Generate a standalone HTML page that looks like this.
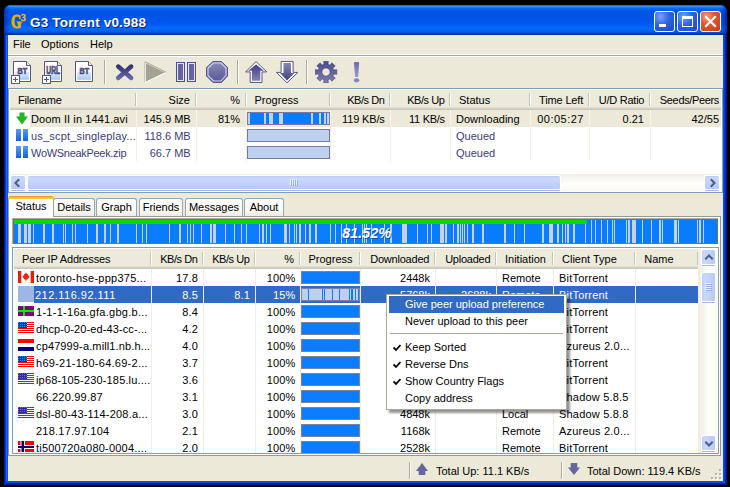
<!DOCTYPE html><html><head><meta charset="utf-8"><title>G3 Torrent</title><style>
*{box-sizing:border-box}
html,body{margin:0;padding:0}
body{width:730px;height:487px;background:#000;overflow:hidden;position:relative;font-family:"Liberation Sans",sans-serif;font-size:11px;color:#000}
.a{position:absolute}
.t{position:absolute;white-space:nowrap;line-height:13px;height:13px}
.r{text-align:right}
#win{left:4px;top:5px;width:723px;height:480px;background:#0831d9;border-radius:7px 7px 0 0;overflow:hidden}
#tb{left:0;top:0;width:723px;height:30px;background:linear-gradient(to bottom,#0058ee 0%,#3593ff 4%,#288eff 6%,#127dff 8%,#036ffc 10%,#0262ee 14%,#0057e5 20%,#0054e3 24%,#0055eb 56%,#005bf5 66%,#026afe 76%,#0062ef 86%,#0052d6 92%,#0040ab 94%,#003092 100%)}
#bl{left:0;top:30px;width:4px;height:450px;background:linear-gradient(to right,#0019cf 0,#0019cf 1px,#0831d9 1px,#0831d9 2px,#166aee 2px,#166aee 3px,#0855dd 3px)}
#br{left:719px;top:30px;width:4px;height:450px;background:linear-gradient(to right,#0448ee 0,#0448ee 1px,#0440e6 1px,#0440e6 2px,#0028b8 2px,#0028b8 3px,#001388 3px)}
#bb{left:2px;top:476px;width:719px;height:4px;background:linear-gradient(to bottom,#0a52e2 0,#0a52e2 1px,#0848dc 1px,#0848dc 2px,#0028b4 2px,#0028b4 3px,#001388 3px)}
#cl{left:4px;top:30px;width:715px;height:446px;background:#ece9d8}
.title{left:26px;top:10px;letter-spacing:0.18px;font-weight:bold;font-size:13.5px;color:#fff;line-height:16px;height:16px;text-shadow:1px 1px 0 #0a1f7a;white-space:nowrap}
.cb{position:absolute;top:6px;width:21px;height:21px;border:1px solid #fff;border-radius:3px}
.hd{position:absolute;background:#ebeadb;height:20px;border-bottom:1px solid #cbc7b8;box-shadow:inset 0 -1px 0 #d6d2c2, inset 0 -2px 0 #e2ded0}
.hs{position:absolute;width:2px;border-left:1px solid #c7c5b2;border-right:1px solid #fff}
.lb{position:absolute;background:#fff;border:1px solid #7f9db9}
.gl{position:absolute;width:1px;background:#f1efe2}
.pb{position:absolute;border:1px solid #7a7aa8}
.tab{position:absolute;border:1px solid #919b9c;border-bottom:none;border-radius:3px 3px 0 0;background:linear-gradient(to bottom,#fff,#f5f4ea 80%,#ece9d8);}
.sel{color:#fff}
.q{color:#3c3c7c}
</style></head><body>
<div id="win" class="a">
<div id="tb" class="a"></div><div class="a" style="left:0;top:0;width:6px;height:30px;background:linear-gradient(to right,rgba(0,25,170,.6),rgba(0,25,170,0))"></div><div class="a" style="left:717px;top:0;width:6px;height:30px;background:linear-gradient(to left,rgba(0,20,150,.7),rgba(0,20,150,0))"></div><div id="bl" class="a"></div><div id="br" class="a"></div><div id="bb" class="a"></div>
<svg class="a" style="left:5px;top:7px" width="20" height="18" viewBox="0 0 20 18"><text transform="translate(1.9,16) scale(0.7,1)" font-family="Liberation Serif" font-weight="bold" font-size="19" fill="#e6ae00" stroke="#e6ae00" stroke-width="1.1" stroke-linejoin="round">G</text><text x="12" y="8.6" font-family="Liberation Serif" font-weight="bold" font-size="9.5" fill="#e8b818" stroke="#e8b818" stroke-width="0.4">3</text></svg>
<div class="a title">G3 Torrent v0.988</div>
<div class="cb" style="left:650px;background:radial-gradient(circle at 30% 25%,#7aa0f8 0%,#2d62e0 45%,#1a48c8 100%)"><div class="a" style="left:4px;top:12px;width:7px;height:3px;background:#fff"></div></div>
<div class="cb" style="left:673px;background:radial-gradient(circle at 30% 25%,#7aa0f8 0%,#2d62e0 45%,#1a48c8 100%)"><div class="a" style="left:4px;top:4px;width:11px;height:11px;border:1px solid #fff;border-top:3px solid #fff"></div></div>
<div class="cb" style="left:696px;background:radial-gradient(circle at 30% 25%,#f0a080 0%,#e0552c 40%,#c53a12 100%)"><svg class="a" style="left:0;top:0" width="19" height="19"><path d="M5 5 L14 14 M14 5 L5 14" stroke="#fff" stroke-width="2.2" stroke-linecap="square"/></svg></div>
<div id="cl" class="a">
<div class="t " style="left:5px;top:3px;">File</div>
<div class="t " style="left:33px;top:3px;">Options</div>
<div class="t " style="left:82px;top:3px;">Help</div>
<div class="a" style="left:0px;top:19px;width:715px;height:1px;background:#fff"></div>
<div class="a" style="left:0px;top:20px;width:715px;height:1px;background:#aca899"></div>
<div class="a" style="left:0px;top:21px;width:715px;height:1px;background:#fff"></div>
<svg class="a" style="left:3px;top:25px" width="24" height="26" viewBox="0 0 24 26"><defs><linearGradient id="dg11" x1="0" y1="0" x2="0" y2="1"><stop offset="0" stop-color="#e2edfb"/><stop offset="1" stop-color="#a4c9f0"/></linearGradient><linearGradient id="tg11" x1="0" y1="0" x2="0" y2="1"><stop offset="0" stop-color="#74749e"/><stop offset="1" stop-color="#303064"/></linearGradient></defs><g transform="translate(-1,0)"><path d="M3.5 1.5 H16.5 L20.5 5.5 V21.5 H3.5 Z" fill="#fff" stroke="#55558f" stroke-width="1"/><rect x="5.2" y="11.8" width="13.8" height="8" fill="url(#dg11)"/><path d="M16.5 1.5 V5.5 H20.5" fill="#eef2fc" stroke="#55558f" stroke-width="1"/><text x="7.6" y="13.9" textLength="9.6" lengthAdjust="spacingAndGlyphs" font-family="Liberation Sans" font-weight="bold" font-size="9.6" fill="url(#tg11)" stroke="#4c4c7e" stroke-width="0.7">BT</text></g><rect x="0.5" y="15.5" width="8" height="8" fill="#fff" stroke="#55558f"/><path d="M2 19.5 H7 M4.5 17 V22" stroke="#55558f" stroke-width="1"/></svg>
<svg class="a" style="left:34px;top:25px" width="24" height="26" viewBox="0 0 24 26"><defs><linearGradient id="dg42" x1="0" y1="0" x2="0" y2="1"><stop offset="0" stop-color="#e2edfb"/><stop offset="1" stop-color="#a4c9f0"/></linearGradient><linearGradient id="tg42" x1="0" y1="0" x2="0" y2="1"><stop offset="0" stop-color="#74749e"/><stop offset="1" stop-color="#303064"/></linearGradient></defs><g transform="translate(-1,0)"><path d="M3.5 1.5 H16.5 L20.5 5.5 V21.5 H3.5 Z" fill="#fff" stroke="#55558f" stroke-width="1"/><rect x="5.2" y="11.8" width="13.8" height="8" fill="url(#dg42)"/><path d="M16.5 1.5 V5.5 H20.5" fill="#eef2fc" stroke="#55558f" stroke-width="1"/><text x="5.3" y="14.3" textLength="13.8" lengthAdjust="spacingAndGlyphs" font-family="Liberation Sans" font-weight="bold" font-size="10" fill="url(#tg42)" stroke="#4c4c7e" stroke-width="0.7">URL</text></g><rect x="0.5" y="15.5" width="8" height="8" fill="#fff" stroke="#55558f"/><path d="M2 19.5 H7 M4.5 17 V22" stroke="#55558f" stroke-width="1"/></svg>
<svg class="a" style="left:64px;top:25px" width="24" height="26" viewBox="0 0 24 26"><defs><linearGradient id="dg72" x1="0" y1="0" x2="0" y2="1"><stop offset="0" stop-color="#e2edfb"/><stop offset="1" stop-color="#a4c9f0"/></linearGradient><linearGradient id="tg72" x1="0" y1="0" x2="0" y2="1"><stop offset="0" stop-color="#74749e"/><stop offset="1" stop-color="#303064"/></linearGradient></defs><g transform="translate(0,0)"><path d="M3.5 1.5 H16.5 L20.5 5.5 V21.5 H3.5 Z" fill="#fff" stroke="#55558f" stroke-width="1"/><rect x="5.2" y="11.8" width="13.8" height="8" fill="url(#dg72)"/><path d="M16.5 1.5 V5.5 H20.5" fill="#eef2fc" stroke="#55558f" stroke-width="1"/><text x="7.6" y="13.9" textLength="9.6" lengthAdjust="spacingAndGlyphs" font-family="Liberation Sans" font-weight="bold" font-size="9.6" fill="url(#tg72)" stroke="#4c4c7e" stroke-width="0.7">BT</text></g></svg>
<div class="a" style="left:96px;top:25px;width:1px;height:24px;background:#aca899"></div><div class="a" style="left:97px;top:25px;width:1px;height:24px;background:#fff"></div>
<div class="a" style="left:229px;top:25px;width:1px;height:24px;background:#aca899"></div><div class="a" style="left:230px;top:25px;width:1px;height:24px;background:#fff"></div>
<div class="a" style="left:298px;top:25px;width:1px;height:24px;background:#aca899"></div><div class="a" style="left:299px;top:25px;width:1px;height:24px;background:#fff"></div>
<svg class="a" style="left:106px;top:27px" width="22" height="20" viewBox="0 0 22 20"><defs><linearGradient id="xg" gradientUnits="userSpaceOnUse" x1="0" y1="2" x2="0" y2="18"><stop offset="0" stop-color="#2a2a6c"/><stop offset="1" stop-color="#6e6ea8"/></linearGradient></defs><path d="M4.2 4.5 L17.2 16 M17.2 4.5 L4.2 16" stroke="url(#xg)" stroke-width="4.4" stroke-linecap="round" fill="none"/></svg>
<svg class="a" style="left:136px;top:26px" width="23" height="23" viewBox="0 0 23 23"><path d="M1.5 1.5 L21.7 11.5 L1.5 21.3 Z" fill="#a3a395" stroke="#fff" stroke-width="1" stroke-linejoin="miter"/><path d="M1 0.8 L22 11.3" stroke="#aeac9e" stroke-width="1.2"/><path d="M0.8 1 V21" stroke="#b0ae9f" stroke-width="0.8"/></svg>
<svg class="a" style="left:168px;top:27px" width="21" height="21" viewBox="0 0 21 21"><rect x="0.5" y="0.5" width="8" height="19" fill="#6464a0" stroke="#4e4e8e"/><rect x="1.5" y="1.5" width="6" height="17" fill="none" stroke="#f4f4fc" stroke-width="0.9"/><rect x="11.5" y="0.5" width="8" height="19" fill="#6464a0" stroke="#4e4e8e"/><rect x="12.5" y="1.5" width="6" height="17" fill="none" stroke="#f4f4fc" stroke-width="0.9"/></svg>
<svg class="a" style="left:198px;top:26px" width="23" height="22" viewBox="0 0 23 22"><defs><linearGradient id="pg" x1="0" y1="0" x2="0" y2="1"><stop offset="0" stop-color="#8c8cbc"/><stop offset="1" stop-color="#565692"/></linearGradient></defs><path d="M7 0.5 H15.5 L21.5 6.5 V15 L15.5 21.5 H7 L0.5 15 V6.5 Z" fill="url(#pg)" stroke="#55558f"/><path d="M7.6 2 H14.9 L20 7.1 V14.4 L14.9 20 H7.6 L2 14.4 V7.1 Z" fill="none" stroke="#d4d4ea" stroke-width="1.1"/></svg>
<svg class="a" style="left:237px;top:26px" width="23" height="23" viewBox="0 0 23 23"><defs><linearGradient id="ug" x1="0" y1="0" x2="0" y2="1"><stop offset="0" stop-color="#40407e"/><stop offset="1" stop-color="#8282b2"/></linearGradient></defs><path d="M11.1 0.6 L21.8 10.9 H17 V21.5 H5.2 V10.9 H0.5 Z" fill="#fff" stroke="#55558f" stroke-width="1"/><path d="M11.1 3.4 L19 9.8 H15.3 V19.8 H6.9 V9.8 H3.2 Z" fill="url(#ug)"/></svg>
<svg class="a" style="left:268px;top:26px" width="23" height="23" viewBox="0 0 23 23"><defs><linearGradient id="dng" x1="0" y1="0" x2="0" y2="1"><stop offset="0" stop-color="#8686b6"/><stop offset="1" stop-color="#40407e"/></linearGradient></defs><path d="M11 21.8 L21.8 11.4 H17.1 V0.5 H5.1 V11.4 H0.4 Z" fill="#fff" stroke="#55558f" stroke-width="1"/><path d="M7.5 2 H14.9 V12 H18.3 L11 19.4 L4 12 H7.5 Z" fill="url(#dng)"/></svg>
<svg class="a" style="left:307px;top:26px" width="23" height="22" viewBox="0 0 23 22"><defs><linearGradient id="pg2" x1="0" y1="0" x2="0" y2="1"><stop offset="0" stop-color="#4c4c8c"/><stop offset="1" stop-color="#7e7eb2"/></linearGradient></defs><path d="M8.98 3.36 L8.68 0.25 L13.32 0.25 L13.02 3.36 L14.97 4.17 L16.97 1.76 L20.24 5.03 L17.83 7.03 L18.64 8.98 L21.75 8.68 L21.75 13.32 L18.64 13.02 L17.83 14.97 L20.24 16.97 L16.97 20.24 L14.97 17.83 L13.02 18.64 L13.32 21.75 L8.68 21.75 L8.98 18.64 L7.03 17.83 L5.03 20.24 L1.76 16.97 L4.17 14.97 L3.36 13.02 L0.25 13.32 L0.25 8.68 L3.36 8.98 L4.17 7.03 L1.76 5.03 L5.03 1.76 L7.03 4.17 Z M11.00 6.90 a4.1 4.1 0 1 0 0.01 0 Z" fill="url(#pg2)" fill-rule="evenodd" stroke="#3e3e82" stroke-width="0.6"/></svg>
<svg class="a" style="left:345px;top:26px" width="8" height="23" viewBox="0 0 8 23"><defs><linearGradient id="eg" x1="0" y1="0" x2="0" y2="1"><stop offset="0" stop-color="#6a6aae"/><stop offset="1" stop-color="#9a9ad2"/></linearGradient></defs><path d="M1 2.2 Q1 1 2.2 1 H4.9 Q6.1 1 6.1 2.2 L5.2 16 H2.1 Z" fill="url(#eg)"/><ellipse cx="3.6" cy="19.3" rx="2.7" ry="2.1" fill="#8484c0"/></svg>
<div class="a" style="left:0px;top:53px;width:715px;height:105px;background:#fff;border:1px solid #7f9db9"></div>
<div class="a" style="left:2px;top:55px;width:711px;height:20px;background:#ebeadb;border-bottom:1px solid #cbc7b8;box-shadow:inset 0 -1px 0 #d6d2c2,inset 0 -2px 0 #e2ded0"></div><div class="t " style="left:10px;top:59px;letter-spacing:-0.2px">Filename</div><div class="a" style="left:127px;top:58px;width:1px;height:13px;background:#c7c5b2"></div><div class="a" style="left:128px;top:58px;width:1px;height:13px;background:#fff"></div><div class="t r " style="right:533px;top:59px;letter-spacing:0px;margin-right:0px">Size</div><div class="a" style="left:187px;top:58px;width:1px;height:13px;background:#c7c5b2"></div><div class="a" style="left:188px;top:58px;width:1px;height:13px;background:#fff"></div><div class="t r " style="right:483px;top:59px;letter-spacing:0px;margin-right:0px">%</div><div class="a" style="left:237px;top:58px;width:1px;height:13px;background:#c7c5b2"></div><div class="a" style="left:238px;top:58px;width:1px;height:13px;background:#fff"></div><div class="t " style="left:246.5px;top:59px;letter-spacing:0px">Progress</div><div class="a" style="left:321px;top:58px;width:1px;height:13px;background:#c7c5b2"></div><div class="a" style="left:322px;top:58px;width:1px;height:13px;background:#fff"></div><div class="t r " style="right:339px;top:59px;letter-spacing:-0.45px;margin-right:-0.45px">KB/s Dn</div><div class="a" style="left:381px;top:58px;width:1px;height:13px;background:#c7c5b2"></div><div class="a" style="left:382px;top:58px;width:1px;height:13px;background:#fff"></div><div class="t r " style="right:279px;top:59px;letter-spacing:-0.45px;margin-right:-0.45px">KB/s Up</div><div class="a" style="left:441px;top:58px;width:1px;height:13px;background:#c7c5b2"></div><div class="a" style="left:442px;top:58px;width:1px;height:13px;background:#fff"></div><div class="t " style="left:451px;top:59px;letter-spacing:0px">Status</div><div class="a" style="left:521px;top:58px;width:1px;height:13px;background:#c7c5b2"></div><div class="a" style="left:522px;top:58px;width:1px;height:13px;background:#fff"></div><div class="t r " style="right:140px;top:59px;letter-spacing:-0.15px;margin-right:-0.15px">Time Left</div><div class="a" style="left:580px;top:58px;width:1px;height:13px;background:#c7c5b2"></div><div class="a" style="left:581px;top:58px;width:1px;height:13px;background:#fff"></div><div class="t r " style="right:79px;top:59px;letter-spacing:-0.25px;margin-right:-0.25px">U/D Ratio</div><div class="a" style="left:641px;top:58px;width:1px;height:13px;background:#c7c5b2"></div><div class="a" style="left:642px;top:58px;width:1px;height:13px;background:#fff"></div><div class="t r " style="right:4px;top:59px;letter-spacing:-0.35px">Seeds/Peers</div>
<div class="a" style="left:22px;top:75px;width:691px;height:17px;background:#ece9d8"></div>
<div class="a" style="left:128px;top:75px;width:1px;height:17px;background:#f6f4ec"></div>
<div class="a" style="left:128px;top:92px;width:1px;height:34px;background:#f1efe2"></div>
<div class="a" style="left:188px;top:75px;width:1px;height:17px;background:#f6f4ec"></div>
<div class="a" style="left:188px;top:92px;width:1px;height:34px;background:#f1efe2"></div>
<div class="a" style="left:238px;top:75px;width:1px;height:17px;background:#f6f4ec"></div>
<div class="a" style="left:238px;top:92px;width:1px;height:34px;background:#f1efe2"></div>
<div class="a" style="left:322px;top:75px;width:1px;height:17px;background:#f6f4ec"></div>
<div class="a" style="left:322px;top:92px;width:1px;height:34px;background:#f1efe2"></div>
<div class="a" style="left:382px;top:75px;width:1px;height:17px;background:#f6f4ec"></div>
<div class="a" style="left:382px;top:92px;width:1px;height:34px;background:#f1efe2"></div>
<div class="a" style="left:442px;top:75px;width:1px;height:17px;background:#f6f4ec"></div>
<div class="a" style="left:442px;top:92px;width:1px;height:34px;background:#f1efe2"></div>
<div class="a" style="left:522px;top:75px;width:1px;height:17px;background:#f6f4ec"></div>
<div class="a" style="left:522px;top:92px;width:1px;height:34px;background:#f1efe2"></div>
<div class="a" style="left:581px;top:75px;width:1px;height:17px;background:#f6f4ec"></div>
<div class="a" style="left:581px;top:92px;width:1px;height:34px;background:#f1efe2"></div>
<div class="a" style="left:642px;top:75px;width:1px;height:17px;background:#f6f4ec"></div>
<div class="a" style="left:642px;top:92px;width:1px;height:34px;background:#f1efe2"></div>
<div class="t " style="left:23px;top:78px;letter-spacing:0.1px">Doom II in 1441.avi</div>
<div class="t r " style="right:532.3px;top:78px;">145.9 MB</div>
<div class="t r " style="right:483px;top:78px;">81%</div>
<div class="t r " style="right:338.3px;top:78px;letter-spacing:-0.15px">119 KB/s</div>
<div class="t r " style="right:278.3px;top:78px;letter-spacing:-0.3px">11 KB/s</div>
<div class="t " style="left:448px;top:78px;">Downloading</div>
<div class="t r " style="right:139.5px;top:78px;letter-spacing:0.5px;margin-right:-0.5px">00:05:27</div>
<div class="t r " style="right:79px;top:78px;">0.21</div>
<div class="t r " style="right:4px;top:78px;">42/55</div>
<div class="t q" style="left:23px;top:95px;letter-spacing:0.18px">us_scpt_singleplay...</div>
<div class="t r q" style="right:532.3px;top:95px;">118.6 MB</div>
<div class="t r q" style="right:483px;top:95px;"></div>
<div class="t r q" style="right:338.3px;top:95px;letter-spacing:-0.15px"></div>
<div class="t r q" style="right:278.3px;top:95px;letter-spacing:-0.3px"></div>
<div class="t q" style="left:448px;top:95px;">Queued</div>
<div class="t r q" style="right:139.5px;top:95px;letter-spacing:0.5px;margin-right:-0.5px"></div>
<div class="t r q" style="right:79px;top:95px;"></div>
<div class="t r q" style="right:4px;top:95px;"></div>
<div class="t q" style="left:23px;top:112px;letter-spacing:-0.3px">WoWSneakPeek.zip</div>
<div class="t r q" style="right:532.3px;top:112px;">66.7 MB</div>
<div class="t r q" style="right:483px;top:112px;"></div>
<div class="t r q" style="right:338.3px;top:112px;letter-spacing:-0.15px"></div>
<div class="t r q" style="right:278.3px;top:112px;letter-spacing:-0.3px"></div>
<div class="t q" style="left:448px;top:112px;">Queued</div>
<div class="t r q" style="right:139.5px;top:112px;letter-spacing:0.5px;margin-right:-0.5px"></div>
<div class="t r q" style="right:79px;top:112px;"></div>
<div class="t r q" style="right:4px;top:112px;"></div>
<svg class="a" style="left:7px;top:77px" width="14" height="13" viewBox="0 0 14 13"><path d="M4.5 0.5 H9.5 V4.5 H13 L7 12.5 L1 4.5 H4.5 Z" fill="#1fb81f"/></svg>
<div class="a" style="left:8px;top:94px;width:5px;height:12px;background:linear-gradient(to bottom,#5a9cf4,#1c5fd0)"></div>
<div class="a" style="left:15px;top:94px;width:5px;height:12px;background:linear-gradient(to bottom,#5a9cf4,#1c5fd0)"></div>
<div class="a" style="left:8px;top:111px;width:5px;height:12px;background:linear-gradient(to bottom,#5a9cf4,#1c5fd0)"></div>
<div class="a" style="left:15px;top:111px;width:5px;height:12px;background:linear-gradient(to bottom,#5a9cf4,#1c5fd0)"></div>
<div class="a" style="left:239px;top:77px;width:83px;height:13px;background:#0a7dff;border:1px solid #7878a8"></div>
<div class="a" style="left:240px;top:78px;width:2px;height:11px;background:#c4d0ee"></div><div class="a" style="left:256px;top:78px;width:2px;height:11px;background:#c4d0ee"></div><div class="a" style="left:261px;top:78px;width:4px;height:11px;background:#c4d0ee"></div><div class="a" style="left:271px;top:78px;width:4px;height:11px;background:#c4d0ee"></div><div class="a" style="left:303px;top:78px;width:2px;height:11px;background:#c4d0ee"></div><div class="a" style="left:311px;top:78px;width:2px;height:11px;background:#c4d0ee"></div><div class="a" style="left:316px;top:78px;width:2px;height:11px;background:#c4d0ee"></div><div class="a" style="left:319px;top:78px;width:2px;height:11px;background:#c4d0ee"></div>
<div class="a" style="left:239px;top:94px;width:83px;height:13px;background:#bdd0ee;border:1px solid #7878a8"></div>
<div class="a" style="left:239px;top:111px;width:83px;height:13px;background:#bdd0ee;border:1px solid #7878a8"></div>
<div class="a" style="left:2px;top:139px;width:711px;height:17px;background:linear-gradient(to bottom,#efede5,#f8f7f2 30%,#fefefb 60%,#f9f8f4)"></div>
<div class="a" style="left:2px;top:140px;width:16px;height:15px;background:#fff;border-radius:2px"></div><div class="a" style="left:3px;top:155px;width:14px;height:1px;background:#a4b8e0;border-radius:0 0 2px 2px"></div><div class="a" style="left:3px;top:141px;width:14px;height:13px;background:linear-gradient(to bottom,#b8caf8 0,#c9d7fc 2px,#c4d3fb 50%,#b4c9f8 100%);border-radius:1.5px"></div>
<svg class="a" style="left:1.3px;top:139.5px" width="16" height="16" viewBox="9.3 174.5 16 16"><path d="M19.5 178.8 L15.8 182.5 L19.5 186.2" fill="none" stroke="#4d6185" stroke-width="2.1"/></svg>
<div class="a" style="left:696px;top:140px;width:16px;height:15px;background:#fff;border-radius:2px"></div><div class="a" style="left:697px;top:155px;width:14px;height:1px;background:#a4b8e0;border-radius:0 0 2px 2px"></div><div class="a" style="left:697px;top:141px;width:14px;height:13px;background:linear-gradient(to bottom,#b8caf8 0,#c9d7fc 2px,#c4d3fb 50%,#b4c9f8 100%);border-radius:1.5px"></div>
<svg class="a" style="left:696.7px;top:139.5px" width="16" height="16" viewBox="704.7 174.5 16 16"><path d="M710.5 178.8 L714.2 182.5 L710.5 186.2" fill="none" stroke="#4d6185" stroke-width="2.1"/></svg>
<div class="a" style="left:19px;top:140px;width:534px;height:15px;background:#fff;border-radius:2px"></div><div class="a" style="left:20px;top:155px;width:532px;height:1px;background:#a4b8e0;border-radius:0 0 2px 2px"></div><div class="a" style="left:20px;top:141px;width:532px;height:13px;background:linear-gradient(to bottom,#b8caf8 0,#c9d7fc 2px,#c4d3fb 50%,#b4c9f8 100%);border-radius:1.5px"></div>
<div class="a" style="left:282px;top:144px;width:1px;height:6px;background:#eef4fe"></div>
<div class="a" style="left:283px;top:145px;width:1px;height:6px;background:#8cb0f8"></div>
<div class="a" style="left:284px;top:144px;width:1px;height:6px;background:#eef4fe"></div>
<div class="a" style="left:285px;top:145px;width:1px;height:6px;background:#8cb0f8"></div>
<div class="a" style="left:286px;top:144px;width:1px;height:6px;background:#eef4fe"></div>
<div class="a" style="left:287px;top:145px;width:1px;height:6px;background:#8cb0f8"></div>
<div class="a" style="left:288px;top:144px;width:1px;height:6px;background:#eef4fe"></div>
<div class="a" style="left:289px;top:145px;width:1px;height:6px;background:#8cb0f8"></div>
<div class="a" style="left:0px;top:181px;width:713px;height:240px;background:#fcfcfe;border:1px solid #919b9c"></div>
<div class="a" style="left:45px;top:163px;width:42px;height:18px;border:1px solid #91a7b4;border-bottom:none;border-radius:3px 3px 0 0;background:linear-gradient(to bottom,#fff,#f8f7f0 70%,#eeece0)"></div>
<div class="t " style="left:45px;top:166px;width:42px;text-align:center">Details</div>
<div class="a" style="left:88px;top:163px;width:41px;height:18px;border:1px solid #91a7b4;border-bottom:none;border-radius:3px 3px 0 0;background:linear-gradient(to bottom,#fff,#f8f7f0 70%,#eeece0)"></div>
<div class="t " style="left:88px;top:166px;width:41px;text-align:center">Graph</div>
<div class="a" style="left:131px;top:163px;width:44px;height:18px;border:1px solid #91a7b4;border-bottom:none;border-radius:3px 3px 0 0;background:linear-gradient(to bottom,#fff,#f8f7f0 70%,#eeece0)"></div>
<div class="t " style="left:131px;top:166px;width:44px;text-align:center">Friends</div>
<div class="a" style="left:177px;top:163px;width:58px;height:18px;border:1px solid #91a7b4;border-bottom:none;border-radius:3px 3px 0 0;background:linear-gradient(to bottom,#fff,#f8f7f0 70%,#eeece0)"></div>
<div class="t " style="left:177px;top:166px;width:58px;text-align:center">Messages</div>
<div class="a" style="left:236px;top:163px;width:40px;height:18px;border:1px solid #91a7b4;border-bottom:none;border-radius:3px 3px 0 0;background:linear-gradient(to bottom,#fff,#f8f7f0 70%,#eeece0)"></div>
<div class="t " style="left:236px;top:166px;width:40px;text-align:center">About</div>
<div class="a" style="left:0px;top:161px;width:46px;height:21px;border:1px solid #91a7b4;border-bottom:none;border-top:none;border-radius:3px 3px 0 0;background:#fcfcfe"></div>
<div class="a" style="left:0px;top:161px;width:46px;height:3px;border-radius:3px 3px 0 0;background:linear-gradient(to bottom,#e68b2c,#ffc73c 60%)"></div>
<div class="t " style="left:0px;top:165px;width:46px;text-align:center">Status</div>
<div class="a" style="left:4px;top:183px;width:708px;height:27px;background:#fff"></div>
<div class="a" style="left:4px;top:183px;width:706px;height:26px;background:#aeaa9c"></div>
<div class="a" style="left:5px;top:184px;width:705px;height:25px;background:#786e68"></div>
<div class="a" style="left:6px;top:185px;width:703px;height:23px;background:#0a7dff"></div>
<div class="a" style="left:10px;top:185px;width:3px;height:23px;background:#c4d0ee"></div><div class="a" style="left:16px;top:185px;width:3px;height:23px;background:#c4d0ee"></div><div class="a" style="left:20px;top:185px;width:3px;height:23px;background:#c4d0ee"></div><div class="a" style="left:25px;top:185px;width:1px;height:23px;background:#c4d0ee"></div><div class="a" style="left:35px;top:185px;width:2px;height:23px;background:#c4d0ee"></div><div class="a" style="left:44px;top:185px;width:2px;height:23px;background:#c4d0ee"></div><div class="a" style="left:55px;top:185px;width:1px;height:23px;background:#c4d0ee"></div><div class="a" style="left:57px;top:185px;width:1px;height:23px;background:#c4d0ee"></div><div class="a" style="left:64px;top:185px;width:1px;height:23px;background:#c4d0ee"></div><div class="a" style="left:67px;top:185px;width:1px;height:23px;background:#c4d0ee"></div><div class="a" style="left:79px;top:185px;width:1px;height:23px;background:#c4d0ee"></div><div class="a" style="left:88px;top:185px;width:2px;height:23px;background:#c4d0ee"></div><div class="a" style="left:96px;top:185px;width:2px;height:23px;background:#c4d0ee"></div><div class="a" style="left:102px;top:185px;width:1px;height:23px;background:#c4d0ee"></div><div class="a" style="left:109px;top:185px;width:2px;height:23px;background:#c4d0ee"></div><div class="a" style="left:128px;top:185px;width:1px;height:23px;background:#c4d0ee"></div><div class="a" style="left:134px;top:185px;width:1px;height:23px;background:#c4d0ee"></div><div class="a" style="left:138px;top:185px;width:1px;height:23px;background:#c4d0ee"></div><div class="a" style="left:161px;top:185px;width:1px;height:23px;background:#c4d0ee"></div><div class="a" style="left:171px;top:185px;width:2px;height:23px;background:#c4d0ee"></div><div class="a" style="left:179px;top:185px;width:1px;height:23px;background:#c4d0ee"></div><div class="a" style="left:182px;top:185px;width:1px;height:23px;background:#c4d0ee"></div><div class="a" style="left:185px;top:185px;width:1px;height:23px;background:#c4d0ee"></div><div class="a" style="left:193px;top:185px;width:1px;height:23px;background:#c4d0ee"></div><div class="a" style="left:202px;top:185px;width:2px;height:23px;background:#c4d0ee"></div><div class="a" style="left:205px;top:185px;width:3px;height:23px;background:#c4d0ee"></div><div class="a" style="left:217px;top:185px;width:1px;height:23px;background:#c4d0ee"></div><div class="a" style="left:226px;top:185px;width:1px;height:23px;background:#c4d0ee"></div><div class="a" style="left:233px;top:185px;width:1px;height:23px;background:#c4d0ee"></div><div class="a" style="left:238px;top:185px;width:1px;height:23px;background:#c4d0ee"></div><div class="a" style="left:251px;top:185px;width:1px;height:23px;background:#c4d0ee"></div><div class="a" style="left:254px;top:185px;width:2px;height:23px;background:#c4d0ee"></div><div class="a" style="left:258px;top:185px;width:1px;height:23px;background:#c4d0ee"></div><div class="a" style="left:262px;top:185px;width:1px;height:23px;background:#c4d0ee"></div><div class="a" style="left:276px;top:185px;width:3px;height:23px;background:#c4d0ee"></div><div class="a" style="left:281px;top:185px;width:1px;height:23px;background:#c4d0ee"></div><div class="a" style="left:286px;top:185px;width:1px;height:23px;background:#c4d0ee"></div><div class="a" style="left:288px;top:185px;width:1px;height:23px;background:#c4d0ee"></div><div class="a" style="left:291px;top:185px;width:2px;height:23px;background:#c4d0ee"></div><div class="a" style="left:297px;top:185px;width:1px;height:23px;background:#c4d0ee"></div><div class="a" style="left:301px;top:185px;width:2px;height:23px;background:#c4d0ee"></div><div class="a" style="left:307px;top:185px;width:2px;height:23px;background:#c4d0ee"></div><div class="a" style="left:322px;top:185px;width:1px;height:23px;background:#c4d0ee"></div><div class="a" style="left:327px;top:185px;width:1px;height:23px;background:#c4d0ee"></div><div class="a" style="left:333px;top:185px;width:1px;height:23px;background:#c4d0ee"></div><div class="a" style="left:338px;top:185px;width:1px;height:23px;background:#c4d0ee"></div><div class="a" style="left:346px;top:185px;width:1px;height:23px;background:#c4d0ee"></div><div class="a" style="left:354px;top:185px;width:1px;height:23px;background:#c4d0ee"></div><div class="a" style="left:356px;top:185px;width:1px;height:23px;background:#c4d0ee"></div><div class="a" style="left:358px;top:185px;width:1px;height:23px;background:#c4d0ee"></div><div class="a" style="left:363px;top:185px;width:1px;height:23px;background:#c4d0ee"></div><div class="a" style="left:376px;top:185px;width:1px;height:23px;background:#c4d0ee"></div><div class="a" style="left:382px;top:185px;width:2px;height:23px;background:#c4d0ee"></div><div class="a" style="left:394px;top:185px;width:5px;height:23px;background:#c4d0ee"></div><div class="a" style="left:409px;top:185px;width:1px;height:23px;background:#c4d0ee"></div><div class="a" style="left:419px;top:185px;width:1px;height:23px;background:#c4d0ee"></div><div class="a" style="left:423px;top:185px;width:1px;height:23px;background:#c4d0ee"></div><div class="a" style="left:432px;top:185px;width:4px;height:23px;background:#c4d0ee"></div><div class="a" style="left:437px;top:185px;width:2px;height:23px;background:#c4d0ee"></div><div class="a" style="left:445px;top:185px;width:1px;height:23px;background:#c4d0ee"></div><div class="a" style="left:449px;top:185px;width:2px;height:23px;background:#c4d0ee"></div><div class="a" style="left:452px;top:185px;width:1px;height:23px;background:#c4d0ee"></div><div class="a" style="left:454px;top:185px;width:1px;height:23px;background:#c4d0ee"></div><div class="a" style="left:456px;top:185px;width:1px;height:23px;background:#c4d0ee"></div><div class="a" style="left:459px;top:185px;width:1px;height:23px;background:#c4d0ee"></div><div class="a" style="left:464px;top:185px;width:2px;height:23px;background:#c4d0ee"></div><div class="a" style="left:474px;top:185px;width:2px;height:23px;background:#c4d0ee"></div><div class="a" style="left:496px;top:185px;width:2px;height:23px;background:#c4d0ee"></div><div class="a" style="left:506px;top:185px;width:1px;height:23px;background:#c4d0ee"></div><div class="a" style="left:516px;top:185px;width:1px;height:23px;background:#c4d0ee"></div><div class="a" style="left:534px;top:185px;width:2px;height:23px;background:#c4d0ee"></div><div class="a" style="left:541px;top:185px;width:4px;height:23px;background:#c4d0ee"></div><div class="a" style="left:549px;top:185px;width:2px;height:23px;background:#c4d0ee"></div><div class="a" style="left:554px;top:185px;width:1px;height:23px;background:#c4d0ee"></div><div class="a" style="left:557px;top:185px;width:1px;height:23px;background:#c4d0ee"></div><div class="a" style="left:559px;top:185px;width:2px;height:23px;background:#c4d0ee"></div><div class="a" style="left:565px;top:185px;width:2px;height:23px;background:#c4d0ee"></div><div class="a" style="left:577px;top:185px;width:1px;height:23px;background:#c4d0ee"></div><div class="a" style="left:583px;top:185px;width:1px;height:23px;background:#c4d0ee"></div><div class="a" style="left:587px;top:185px;width:1px;height:23px;background:#c4d0ee"></div><div class="a" style="left:593px;top:185px;width:1px;height:23px;background:#c4d0ee"></div><div class="a" style="left:599px;top:185px;width:1px;height:23px;background:#c4d0ee"></div><div class="a" style="left:604px;top:185px;width:1px;height:23px;background:#c4d0ee"></div><div class="a" style="left:606px;top:185px;width:1px;height:23px;background:#c4d0ee"></div><div class="a" style="left:618px;top:185px;width:1px;height:23px;background:#c4d0ee"></div><div class="a" style="left:620px;top:185px;width:2px;height:23px;background:#c4d0ee"></div><div class="a" style="left:624px;top:185px;width:4px;height:23px;background:#c4d0ee"></div><div class="a" style="left:634px;top:185px;width:1px;height:23px;background:#c4d0ee"></div><div class="a" style="left:643px;top:185px;width:1px;height:23px;background:#c4d0ee"></div><div class="a" style="left:651px;top:185px;width:2px;height:23px;background:#c4d0ee"></div><div class="a" style="left:654px;top:185px;width:1px;height:23px;background:#c4d0ee"></div><div class="a" style="left:666px;top:185px;width:3px;height:23px;background:#c4d0ee"></div><div class="a" style="left:670px;top:185px;width:1px;height:23px;background:#c4d0ee"></div><div class="a" style="left:689px;top:185px;width:1px;height:23px;background:#c4d0ee"></div><div class="a" style="left:691px;top:185px;width:2px;height:23px;background:#c4d0ee"></div><div class="a" style="left:695px;top:185px;width:1px;height:23px;background:#c4d0ee"></div>
<div class="a" style="left:6px;top:185px;width:573px;height:4px;background:#00dd00"></div>
<div class="t " style="left:292px;top:189px;width:133px;text-align:center;font-weight:bold;font-style:italic;font-size:14.5px;color:#fff;line-height:18px;height:18px;text-shadow:1px 1px 0 rgba(0,40,140,.6)">81.52%</div>
<div class="a" style="left:4px;top:212px;width:707px;height:207px;background:#fff;border:1px solid #7f9db9"></div>
<div class="a" style="left:6px;top:214px;width:684px;height:20px;background:#ebeadb;border-bottom:1px solid #cbc7b8;box-shadow:inset 0 -1px 0 #d6d2c2,inset 0 -2px 0 #e2ded0"></div><div class="t " style="left:14px;top:218px;letter-spacing:-0.15px">Peer IP Addresses</div><div class="a" style="left:142px;top:217px;width:1px;height:13px;background:#c7c5b2"></div><div class="a" style="left:143px;top:217px;width:1px;height:13px;background:#fff"></div><div class="t r " style="right:526px;top:218px;letter-spacing:-0.45px;margin-right:-0.45px">KB/s Dn</div><div class="a" style="left:194px;top:217px;width:1px;height:13px;background:#c7c5b2"></div><div class="a" style="left:195px;top:217px;width:1px;height:13px;background:#fff"></div><div class="t r " style="right:474px;top:218px;letter-spacing:-0.45px;margin-right:-0.45px">KB/s Up</div><div class="a" style="left:246px;top:217px;width:1px;height:13px;background:#c7c5b2"></div><div class="a" style="left:247px;top:217px;width:1px;height:13px;background:#fff"></div><div class="t r " style="right:429px;top:218px;letter-spacing:0px;margin-right:0px">%</div><div class="a" style="left:291px;top:217px;width:1px;height:13px;background:#c7c5b2"></div><div class="a" style="left:292px;top:217px;width:1px;height:13px;background:#fff"></div><div class="t " style="left:300.5px;top:218px;letter-spacing:0px">Progress</div><div class="a" style="left:351px;top:217px;width:1px;height:13px;background:#c7c5b2"></div><div class="a" style="left:352px;top:217px;width:1px;height:13px;background:#fff"></div><div class="t r " style="right:294px;top:218px;letter-spacing:-0.22px;margin-right:-0.22px">Downloaded</div><div class="a" style="left:426px;top:217px;width:1px;height:13px;background:#c7c5b2"></div><div class="a" style="left:427px;top:217px;width:1px;height:13px;background:#fff"></div><div class="t r " style="right:233px;top:218px;letter-spacing:-0.25px;margin-right:-0.25px">Uploaded</div><div class="a" style="left:487px;top:217px;width:1px;height:13px;background:#c7c5b2"></div><div class="a" style="left:488px;top:217px;width:1px;height:13px;background:#fff"></div><div class="t " style="left:497px;top:218px;letter-spacing:0px">Initiation</div><div class="a" style="left:544px;top:217px;width:1px;height:13px;background:#c7c5b2"></div><div class="a" style="left:545px;top:217px;width:1px;height:13px;background:#fff"></div><div class="t " style="left:554px;top:218px;letter-spacing:0px">Client Type</div><div class="a" style="left:626px;top:217px;width:1px;height:13px;background:#c7c5b2"></div><div class="a" style="left:627px;top:217px;width:1px;height:13px;background:#fff"></div><div class="t " style="left:636.3px;top:218px;letter-spacing:0px">Name</div><div class="a" style="left:689px;top:217px;width:1px;height:13px;background:#c7c5b2"></div><div class="a" style="left:690px;top:217px;width:1px;height:13px;background:#fff"></div>
<svg class="a" style="left:10px;top:236px" width="16" height="12" viewBox="0 0 16 12"><rect width="16" height="12" fill="#fff"/><rect width="3.3" height="12" fill="#e2200f"/><rect x="12.7" width="3.3" height="12" fill="#e2200f"/><path d="M8 1.2 L9 3.2 L10.2 2.8 L9.9 4.8 L11.4 4.2 L11.2 6.2 L10.2 7.6 L9.4 8.6 L8.3 8.7 V10.2 H7.7 V8.7 L6.6 8.6 L5.8 7.6 L4.8 6.2 L4.6 4.2 L6.1 4.8 L5.8 2.8 L7 3.2 Z" fill="#e2281a"/></svg>
<div class="t " style="left:28px;top:237px;letter-spacing:0.25px">toronto-hse-ppp375...</div>
<div class="t r " style="right:525px;top:237px;letter-spacing:0.2px;margin-right:-0.2px">17.8</div>
<div class="t r " style="right:473px;top:237px;letter-spacing:0.2px;margin-right:-0.2px"></div>
<div class="t r " style="right:427.5px;top:237px;letter-spacing:0.15px">100%</div>
<div class="t r " style="right:293px;top:237px;">2448k</div>
<div class="t r " style="right:232px;top:237px;"></div>
<div class="t " style="left:494px;top:237px;">Remote</div>
<div class="t " style="left:551px;top:237px;letter-spacing:0.2px">BitTorrent</div>
<div class="a" style="left:293px;top:236px;width:59px;height:13px;background:#0a7dff;border:1px solid #8080a0"></div>
<div class="a" style="left:10px;top:251px;width:16px;height:16px;background:#9db6e4"></div>
<div class="a" style="left:26px;top:251px;width:664px;height:17px;background:#316ac5"></div>
<div class="t sel" style="left:27px;top:254px;letter-spacing:0.48px">212.116.92.111</div>
<div class="t r sel" style="right:525px;top:254px;letter-spacing:0.2px;margin-right:-0.2px">8.5</div>
<div class="t r sel" style="right:473px;top:254px;letter-spacing:0.2px;margin-right:-0.2px">8.1</div>
<div class="t r sel" style="right:427.5px;top:254px;letter-spacing:0.15px">15%</div>
<div class="t r sel" style="right:293px;top:254px;">5768k</div>
<div class="t r sel" style="right:232px;top:254px;">2688k</div>
<div class="t sel" style="left:494px;top:254px;">Remote</div>
<div class="t sel" style="left:551px;top:254px;letter-spacing:0.2px">BitTorrent</div>
<div class="a" style="left:293px;top:253px;width:59px;height:13px;background:#bdd0ee;border:1px solid #8080a0"></div>
<div class="a" style="left:300px;top:254px;width:1px;height:11px;background:#0a7dff"></div><div class="a" style="left:314px;top:254px;width:1px;height:11px;background:#0a7dff"></div><div class="a" style="left:316px;top:254px;width:1px;height:11px;background:#0a7dff"></div><div class="a" style="left:324px;top:254px;width:1px;height:11px;background:#0a7dff"></div><div class="a" style="left:331px;top:254px;width:1px;height:11px;background:#0a7dff"></div><div class="a" style="left:341px;top:254px;width:1px;height:11px;background:#0a7dff"></div><div class="a" style="left:343px;top:254px;width:2px;height:11px;background:#0a7dff"></div><div class="a" style="left:347px;top:254px;width:1px;height:11px;background:#0a7dff"></div><div class="a" style="left:350px;top:254px;width:1px;height:11px;background:#0a7dff"></div>
<svg class="a" style="left:10px;top:271px" width="16" height="10" viewBox="0 0 16 10"><rect width="16" height="10" fill="#800080"/><rect x="5" width="2" height="10" fill="#00f000"/><rect y="4" width="16" height="2" fill="#00f000"/></svg>
<div class="t " style="left:28px;top:271px;letter-spacing:0.28px">1-1-1-16a.gfa.gbg.b...</div>
<div class="t r " style="right:525px;top:271px;letter-spacing:0.2px;margin-right:-0.2px">8.4</div>
<div class="t r " style="right:473px;top:271px;letter-spacing:0.2px;margin-right:-0.2px"></div>
<div class="t r " style="right:427.5px;top:271px;letter-spacing:0.15px">100%</div>
<div class="t r " style="right:293px;top:271px;"></div>
<div class="t r " style="right:232px;top:271px;"></div>
<div class="t " style="left:494px;top:271px;"></div>
<div class="t " style="left:551px;top:271px;letter-spacing:0.2px">BitTorrent</div>
<div class="a" style="left:293px;top:270px;width:59px;height:13px;background:#0a7dff;border:1px solid #8080a0"></div>
<svg class="a" style="left:10px;top:287px" width="16" height="11" viewBox="0 0 16 11"><rect width="16" height="11" fill="#fff"/><rect y="0" width="16" height="1" fill="#ff0000"/><rect y="2" width="16" height="1" fill="#ff0000"/><rect y="4" width="16" height="1" fill="#ff0000"/><rect y="6" width="16" height="1" fill="#ff0000"/><rect y="8" width="16" height="1" fill="#ff0000"/><rect y="10" width="16" height="1" fill="#ff0000"/><rect width="9" height="6" fill="#2c2c9c"/><rect x="0" y="0" width="1" height="1" fill="#0098ff"/><rect x="2" y="0" width="1" height="1" fill="#0098ff"/><rect x="4" y="0" width="1" height="1" fill="#0098ff"/><rect x="6" y="0" width="1" height="1" fill="#0098ff"/><rect x="8" y="0" width="1" height="1" fill="#0098ff"/><rect x="0" y="2" width="1" height="1" fill="#0098ff"/><rect x="2" y="2" width="1" height="1" fill="#0098ff"/><rect x="4" y="2" width="1" height="1" fill="#0098ff"/><rect x="6" y="2" width="1" height="1" fill="#0098ff"/><rect x="8" y="2" width="1" height="1" fill="#0098ff"/><rect x="0" y="4" width="1" height="1" fill="#0098ff"/><rect x="2" y="4" width="1" height="1" fill="#0098ff"/><rect x="4" y="4" width="1" height="1" fill="#0098ff"/><rect x="6" y="4" width="1" height="1" fill="#0098ff"/><rect x="8" y="4" width="1" height="1" fill="#0098ff"/></svg>
<div class="t " style="left:28px;top:288px;letter-spacing:0.11px">dhcp-0-20-ed-43-cc-...</div>
<div class="t r " style="right:525px;top:288px;letter-spacing:0.2px;margin-right:-0.2px">4.2</div>
<div class="t r " style="right:473px;top:288px;letter-spacing:0.2px;margin-right:-0.2px"></div>
<div class="t r " style="right:427.5px;top:288px;letter-spacing:0.15px">100%</div>
<div class="t r " style="right:293px;top:288px;"></div>
<div class="t r " style="right:232px;top:288px;"></div>
<div class="t " style="left:494px;top:288px;"></div>
<div class="t " style="left:551px;top:288px;letter-spacing:0.2px">BitTorrent</div>
<div class="a" style="left:293px;top:287px;width:59px;height:13px;background:#0a7dff;border:1px solid #8080a0"></div>
<svg class="a" style="left:10px;top:304px" width="16" height="12" viewBox="0 0 16 12"><rect width="16" height="12" fill="#fff"/><rect width="16" height="4" fill="#ff0000"/><rect y="8" width="16" height="4" fill="#000080"/></svg>
<div class="t " style="left:28px;top:305px;letter-spacing:0.13px">cp47999-a.mill1.nb.h...</div>
<div class="t r " style="right:525px;top:305px;letter-spacing:0.2px;margin-right:-0.2px">4.0</div>
<div class="t r " style="right:473px;top:305px;letter-spacing:0.2px;margin-right:-0.2px"></div>
<div class="t r " style="right:427.5px;top:305px;letter-spacing:0.15px">100%</div>
<div class="t r " style="right:293px;top:305px;"></div>
<div class="t r " style="right:232px;top:305px;"></div>
<div class="t " style="left:494px;top:305px;"></div>
<div class="t " style="left:551px;top:305px;letter-spacing:0.2px">Azureus 2.0...</div>
<div class="a" style="left:293px;top:304px;width:59px;height:13px;background:#0a7dff;border:1px solid #8080a0"></div>
<svg class="a" style="left:10px;top:321px" width="16" height="11" viewBox="0 0 16 11"><rect width="16" height="11" fill="#fff"/><rect y="0" width="16" height="1" fill="#ff0000"/><rect y="2" width="16" height="1" fill="#ff0000"/><rect y="4" width="16" height="1" fill="#ff0000"/><rect y="6" width="16" height="1" fill="#ff0000"/><rect y="8" width="16" height="1" fill="#ff0000"/><rect y="10" width="16" height="1" fill="#ff0000"/><rect width="9" height="6" fill="#2c2c9c"/><rect x="0" y="0" width="1" height="1" fill="#0098ff"/><rect x="2" y="0" width="1" height="1" fill="#0098ff"/><rect x="4" y="0" width="1" height="1" fill="#0098ff"/><rect x="6" y="0" width="1" height="1" fill="#0098ff"/><rect x="8" y="0" width="1" height="1" fill="#0098ff"/><rect x="0" y="2" width="1" height="1" fill="#0098ff"/><rect x="2" y="2" width="1" height="1" fill="#0098ff"/><rect x="4" y="2" width="1" height="1" fill="#0098ff"/><rect x="6" y="2" width="1" height="1" fill="#0098ff"/><rect x="8" y="2" width="1" height="1" fill="#0098ff"/><rect x="0" y="4" width="1" height="1" fill="#0098ff"/><rect x="2" y="4" width="1" height="1" fill="#0098ff"/><rect x="4" y="4" width="1" height="1" fill="#0098ff"/><rect x="6" y="4" width="1" height="1" fill="#0098ff"/><rect x="8" y="4" width="1" height="1" fill="#0098ff"/></svg>
<div class="t " style="left:28px;top:322px;letter-spacing:0.26px">h69-21-180-64.69-2...</div>
<div class="t r " style="right:525px;top:322px;letter-spacing:0.2px;margin-right:-0.2px">3.7</div>
<div class="t r " style="right:473px;top:322px;letter-spacing:0.2px;margin-right:-0.2px"></div>
<div class="t r " style="right:427.5px;top:322px;letter-spacing:0.15px">100%</div>
<div class="t r " style="right:293px;top:322px;"></div>
<div class="t r " style="right:232px;top:322px;"></div>
<div class="t " style="left:494px;top:322px;"></div>
<div class="t " style="left:551px;top:322px;letter-spacing:0.2px">BitTorrent</div>
<div class="a" style="left:293px;top:321px;width:59px;height:13px;background:#0a7dff;border:1px solid #8080a0"></div>
<svg class="a" style="left:10px;top:338px" width="16" height="11" viewBox="0 0 16 11"><rect width="16" height="11" fill="#fff"/><rect y="0" width="16" height="1" fill="#ff0000"/><rect y="2" width="16" height="1" fill="#ff0000"/><rect y="4" width="16" height="1" fill="#ff0000"/><rect y="6" width="16" height="1" fill="#ff0000"/><rect y="8" width="16" height="1" fill="#ff0000"/><rect y="10" width="16" height="1" fill="#ff0000"/><rect width="9" height="6" fill="#2c2c9c"/><rect x="0" y="0" width="1" height="1" fill="#0098ff"/><rect x="2" y="0" width="1" height="1" fill="#0098ff"/><rect x="4" y="0" width="1" height="1" fill="#0098ff"/><rect x="6" y="0" width="1" height="1" fill="#0098ff"/><rect x="8" y="0" width="1" height="1" fill="#0098ff"/><rect x="0" y="2" width="1" height="1" fill="#0098ff"/><rect x="2" y="2" width="1" height="1" fill="#0098ff"/><rect x="4" y="2" width="1" height="1" fill="#0098ff"/><rect x="6" y="2" width="1" height="1" fill="#0098ff"/><rect x="8" y="2" width="1" height="1" fill="#0098ff"/><rect x="0" y="4" width="1" height="1" fill="#0098ff"/><rect x="2" y="4" width="1" height="1" fill="#0098ff"/><rect x="4" y="4" width="1" height="1" fill="#0098ff"/><rect x="6" y="4" width="1" height="1" fill="#0098ff"/><rect x="8" y="4" width="1" height="1" fill="#0098ff"/></svg>
<div class="t " style="left:28px;top:339px;letter-spacing:0.16px">ip68-105-230-185.lu....</div>
<div class="t r " style="right:525px;top:339px;letter-spacing:0.2px;margin-right:-0.2px">3.6</div>
<div class="t r " style="right:473px;top:339px;letter-spacing:0.2px;margin-right:-0.2px"></div>
<div class="t r " style="right:427.5px;top:339px;letter-spacing:0.15px">100%</div>
<div class="t r " style="right:293px;top:339px;"></div>
<div class="t r " style="right:232px;top:339px;"></div>
<div class="t " style="left:494px;top:339px;"></div>
<div class="t " style="left:551px;top:339px;letter-spacing:0.2px">BitTorrent</div>
<div class="a" style="left:293px;top:338px;width:59px;height:13px;background:#0a7dff;border:1px solid #8080a0"></div>

<div class="t " style="left:28px;top:356px;letter-spacing:0.22px">66.220.99.87</div>
<div class="t r " style="right:525px;top:356px;letter-spacing:0.2px;margin-right:-0.2px">3.1</div>
<div class="t r " style="right:473px;top:356px;letter-spacing:0.2px;margin-right:-0.2px"></div>
<div class="t r " style="right:427.5px;top:356px;letter-spacing:0.15px">100%</div>
<div class="t r " style="right:293px;top:356px;"></div>
<div class="t r " style="right:232px;top:356px;"></div>
<div class="t " style="left:494px;top:356px;"></div>
<div class="t " style="left:551px;top:356px;letter-spacing:0.2px">Shadow 5.8.5</div>
<div class="a" style="left:293px;top:355px;width:59px;height:13px;background:#0a7dff;border:1px solid #8080a0"></div>
<svg class="a" style="left:10px;top:372px" width="16" height="11" viewBox="0 0 16 11"><rect width="16" height="11" fill="#fff"/><rect y="0" width="16" height="1" fill="#ff0000"/><rect y="2" width="16" height="1" fill="#ff0000"/><rect y="4" width="16" height="1" fill="#ff0000"/><rect y="6" width="16" height="1" fill="#ff0000"/><rect y="8" width="16" height="1" fill="#ff0000"/><rect y="10" width="16" height="1" fill="#ff0000"/><rect width="9" height="6" fill="#2c2c9c"/><rect x="0" y="0" width="1" height="1" fill="#0098ff"/><rect x="2" y="0" width="1" height="1" fill="#0098ff"/><rect x="4" y="0" width="1" height="1" fill="#0098ff"/><rect x="6" y="0" width="1" height="1" fill="#0098ff"/><rect x="8" y="0" width="1" height="1" fill="#0098ff"/><rect x="0" y="2" width="1" height="1" fill="#0098ff"/><rect x="2" y="2" width="1" height="1" fill="#0098ff"/><rect x="4" y="2" width="1" height="1" fill="#0098ff"/><rect x="6" y="2" width="1" height="1" fill="#0098ff"/><rect x="8" y="2" width="1" height="1" fill="#0098ff"/><rect x="0" y="4" width="1" height="1" fill="#0098ff"/><rect x="2" y="4" width="1" height="1" fill="#0098ff"/><rect x="4" y="4" width="1" height="1" fill="#0098ff"/><rect x="6" y="4" width="1" height="1" fill="#0098ff"/><rect x="8" y="4" width="1" height="1" fill="#0098ff"/></svg>
<div class="t " style="left:28px;top:373px;letter-spacing:0.21px">dsl-80-43-114-208.a...</div>
<div class="t r " style="right:525px;top:373px;letter-spacing:0.2px;margin-right:-0.2px">3.0</div>
<div class="t r " style="right:473px;top:373px;letter-spacing:0.2px;margin-right:-0.2px"></div>
<div class="t r " style="right:427.5px;top:373px;letter-spacing:0.15px">100%</div>
<div class="t r " style="right:293px;top:373px;">4848k</div>
<div class="t r " style="right:232px;top:373px;"></div>
<div class="t " style="left:494px;top:373px;">Local</div>
<div class="t " style="left:551px;top:373px;letter-spacing:0.2px">Shadow 5.8.8</div>
<div class="a" style="left:293px;top:372px;width:59px;height:13px;background:#0a7dff;border:1px solid #8080a0"></div>

<div class="t " style="left:28px;top:390px;letter-spacing:0.23px">218.17.97.104</div>
<div class="t r " style="right:525px;top:390px;letter-spacing:0.2px;margin-right:-0.2px">2.1</div>
<div class="t r " style="right:473px;top:390px;letter-spacing:0.2px;margin-right:-0.2px"></div>
<div class="t r " style="right:427.5px;top:390px;letter-spacing:0.15px">100%</div>
<div class="t r " style="right:293px;top:390px;">1168k</div>
<div class="t r " style="right:232px;top:390px;"></div>
<div class="t " style="left:494px;top:390px;">Remote</div>
<div class="t " style="left:551px;top:390px;letter-spacing:0.2px">Azureus 2.0...</div>
<div class="a" style="left:293px;top:389px;width:59px;height:13px;background:#0a7dff;border:1px solid #8080a0"></div>
<svg class="a" style="left:10px;top:406px" width="16" height="11" viewBox="0 0 16 11"><rect width="16" height="11" fill="#ff0000"/><rect x="2.5" width="4.5" height="11" fill="#fff"/><rect y="4" width="16" height="4" fill="#fff"/><rect x="3.5" width="2.5" height="11" fill="#000080"/><rect y="5" width="16" height="2" fill="#000080"/></svg>
<div class="t " style="left:28px;top:407px;letter-spacing:0.2px">ti500720a080-0004....</div>
<div class="t r " style="right:525px;top:407px;letter-spacing:0.2px;margin-right:-0.2px">2.0</div>
<div class="t r " style="right:473px;top:407px;letter-spacing:0.2px;margin-right:-0.2px"></div>
<div class="t r " style="right:427.5px;top:407px;letter-spacing:0.15px">100%</div>
<div class="t r " style="right:293px;top:407px;">2528k</div>
<div class="t r " style="right:232px;top:407px;"></div>
<div class="t " style="left:494px;top:407px;">Remote</div>
<div class="t " style="left:551px;top:407px;letter-spacing:0.2px">BitTorrent</div>
<div class="a" style="left:293px;top:406px;width:59px;height:13px;background:#0a7dff;border:1px solid #8080a0"></div>
<div class="a" style="left:143px;top:234px;width:1px;height:184px;background:#f1efe2"></div>
<div class="a" style="left:195px;top:234px;width:1px;height:184px;background:#f1efe2"></div>
<div class="a" style="left:247px;top:234px;width:1px;height:184px;background:#f1efe2"></div>
<div class="a" style="left:292px;top:234px;width:1px;height:184px;background:#f1efe2"></div>
<div class="a" style="left:352px;top:234px;width:1px;height:184px;background:#f1efe2"></div>
<div class="a" style="left:427px;top:234px;width:1px;height:184px;background:#f1efe2"></div>
<div class="a" style="left:488px;top:234px;width:1px;height:184px;background:#f1efe2"></div>
<div class="a" style="left:545px;top:234px;width:1px;height:184px;background:#f1efe2"></div>
<div class="a" style="left:627px;top:234px;width:1px;height:184px;background:#f1efe2"></div>
<div class="a" style="left:5px;top:418px;width:705px;height:1px;background:#fff"></div>
<div class="a" style="left:4px;top:418px;width:707px;height:1px;background:#7f9db9"></div>
<div class="a" style="left:1px;top:419px;width:711px;height:1px;background:#fcfcfe"></div>
<div class="a" style="left:0px;top:420px;width:713px;height:1px;background:#919b9c"></div>
<div class="a" style="left:0px;top:421px;width:715px;height:25px;background:#ece9d8"></div>
<div class="a" style="left:690px;top:214px;width:19px;height:204px;background:linear-gradient(to right,#efede3 0,#f1efe6 3px,#f8f7f2 7px,#fefefb 60%,#f9f8f4)"></div>
<div class="a" style="left:693px;top:214px;width:15px;height:16px;background:#fff;border-radius:2px"></div><div class="a" style="left:694px;top:230px;width:13px;height:1px;background:#a4b8e0;border-radius:0 0 2px 2px"></div><div class="a" style="left:694px;top:215px;width:13px;height:14px;background:linear-gradient(to right,#b8caf8 0,#c9d7fc 2px,#c4d3fb 50%,#b4c9f8 100%);border-radius:1.5px"></div>
<svg class="a" style="left:692.5px;top:214px" width="16" height="16" viewBox="700.5 249 16 16"><path d="M704.8 259.2 L708.5 255.5 L712.2 259.2" fill="none" stroke="#4d6185" stroke-width="2.1"/></svg>
<div class="a" style="left:693px;top:400px;width:15px;height:16px;background:#fff;border-radius:2px"></div><div class="a" style="left:694px;top:416px;width:13px;height:1px;background:#a4b8e0;border-radius:0 0 2px 2px"></div><div class="a" style="left:694px;top:401px;width:13px;height:14px;background:linear-gradient(to right,#b8caf8 0,#c9d7fc 2px,#c4d3fb 50%,#b4c9f8 100%);border-radius:1.5px"></div>
<svg class="a" style="left:692.5px;top:400.5px" width="16" height="16" viewBox="700.5 435.5 16 16"><path d="M704.8 441.3 L708.5 445 L712.2 441.3" fill="none" stroke="#4d6185" stroke-width="2.1"/></svg>
<div class="a" style="left:693px;top:237px;width:15px;height:30px;background:#fff;border-radius:2px"></div><div class="a" style="left:694px;top:267px;width:13px;height:1px;background:#a4b8e0;border-radius:0 0 2px 2px"></div><div class="a" style="left:694px;top:238px;width:13px;height:28px;background:linear-gradient(to right,#b8caf8 0,#c9d7fc 2px,#c4d3fb 50%,#b4c9f8 100%);border-radius:1.5px"></div>
<div class="a" style="left:697px;top:248px;width:6px;height:1px;background:#eef4fe"></div>
<div class="a" style="left:698px;top:249px;width:6px;height:1px;background:#8cb0f8"></div>
<div class="a" style="left:697px;top:250px;width:6px;height:1px;background:#eef4fe"></div>
<div class="a" style="left:698px;top:251px;width:6px;height:1px;background:#8cb0f8"></div>
<div class="a" style="left:697px;top:252px;width:6px;height:1px;background:#eef4fe"></div>
<div class="a" style="left:698px;top:253px;width:6px;height:1px;background:#8cb0f8"></div>
<div class="a" style="left:697px;top:254px;width:6px;height:1px;background:#eef4fe"></div>
<div class="a" style="left:698px;top:255px;width:6px;height:1px;background:#8cb0f8"></div>
<div class="a" style="left:381px;top:262px;width:180.5px;height:115.5px;background:rgba(0,0,0,.42);filter:blur(1.1px)"></div>
<div class="a" style="left:378px;top:259px;width:181px;height:116px;background:#fff;border:1px solid #aca899"></div>
<div class="a" style="left:381px;top:261px;width:175px;height:17px;background:#316ac5"></div>
<div class="t sel" style="left:397px;top:263px;">Give peer upload preference</div>
<div class="t " style="left:397px;top:280px;">Never upload to this peer</div>
<div class="a" style="left:382px;top:298px;width:173px;height:1px;background:#aca899"></div>
<div class="t " style="left:397px;top:306px;">Keep Sorted</div>
<svg class="a" style="left:385px;top:309px" width="8" height="8" viewBox="0 0 8 8"><path d="M0.5 3.5 L3 6 L7.5 1" fill="none" stroke="#000" stroke-width="1.8"/></svg>
<div class="t " style="left:397px;top:323px;">Reverse Dns</div>
<svg class="a" style="left:385px;top:326px" width="8" height="8" viewBox="0 0 8 8"><path d="M0.5 3.5 L3 6 L7.5 1" fill="none" stroke="#000" stroke-width="1.8"/></svg>
<div class="t " style="left:397px;top:340px;">Show Country Flags</div>
<svg class="a" style="left:385px;top:343px" width="8" height="8" viewBox="0 0 8 8"><path d="M0.5 3.5 L3 6 L7.5 1" fill="none" stroke="#000" stroke-width="1.8"/></svg>
<div class="t " style="left:397px;top:357px;">Copy address</div>
<div class="a" style="left:401px;top:427px;width:1px;height:17px;background:#aca899"></div><div class="a" style="left:402px;top:427px;width:1px;height:17px;background:#fff"></div>
<div class="a" style="left:553px;top:427px;width:1px;height:17px;background:#aca899"></div><div class="a" style="left:554px;top:427px;width:1px;height:17px;background:#fff"></div>
<svg class="a" style="left:408px;top:428px" width="12" height="12" viewBox="0 0 12 12"><path d="M6 0 L12 8 H9.3 V12 H2.7 V8 H0 Z" fill="#6666a0"/></svg>
<svg class="a" style="left:560px;top:428px" width="12" height="12" viewBox="0 0 12 12"><path d="M6 12 L12 4.5 H9.3 V0 H2.7 V4.5 H0 Z" fill="#6666a0"/></svg>
<div class="t " style="left:428px;top:430px;">Total Up: 11.1 KB/s</div>
<div class="t " style="left:579px;top:430px;">Total Down: 119.4 KB/s</div>
<div class="a" style="left:712px;top:435px;width:2px;height:2px;background:#fff"></div>
<div class="a" style="left:711px;top:434px;width:2px;height:2px;background:#b8b4a2"></div>
<div class="a" style="left:708px;top:439px;width:2px;height:2px;background:#fff"></div>
<div class="a" style="left:707px;top:438px;width:2px;height:2px;background:#b8b4a2"></div>
<div class="a" style="left:712px;top:439px;width:2px;height:2px;background:#fff"></div>
<div class="a" style="left:711px;top:438px;width:2px;height:2px;background:#b8b4a2"></div>
<div class="a" style="left:704px;top:443px;width:2px;height:2px;background:#fff"></div>
<div class="a" style="left:703px;top:442px;width:2px;height:2px;background:#b8b4a2"></div>
<div class="a" style="left:708px;top:443px;width:2px;height:2px;background:#fff"></div>
<div class="a" style="left:707px;top:442px;width:2px;height:2px;background:#b8b4a2"></div>
<div class="a" style="left:712px;top:443px;width:2px;height:2px;background:#fff"></div>
<div class="a" style="left:711px;top:442px;width:2px;height:2px;background:#b8b4a2"></div>
</div></div></body></html>
